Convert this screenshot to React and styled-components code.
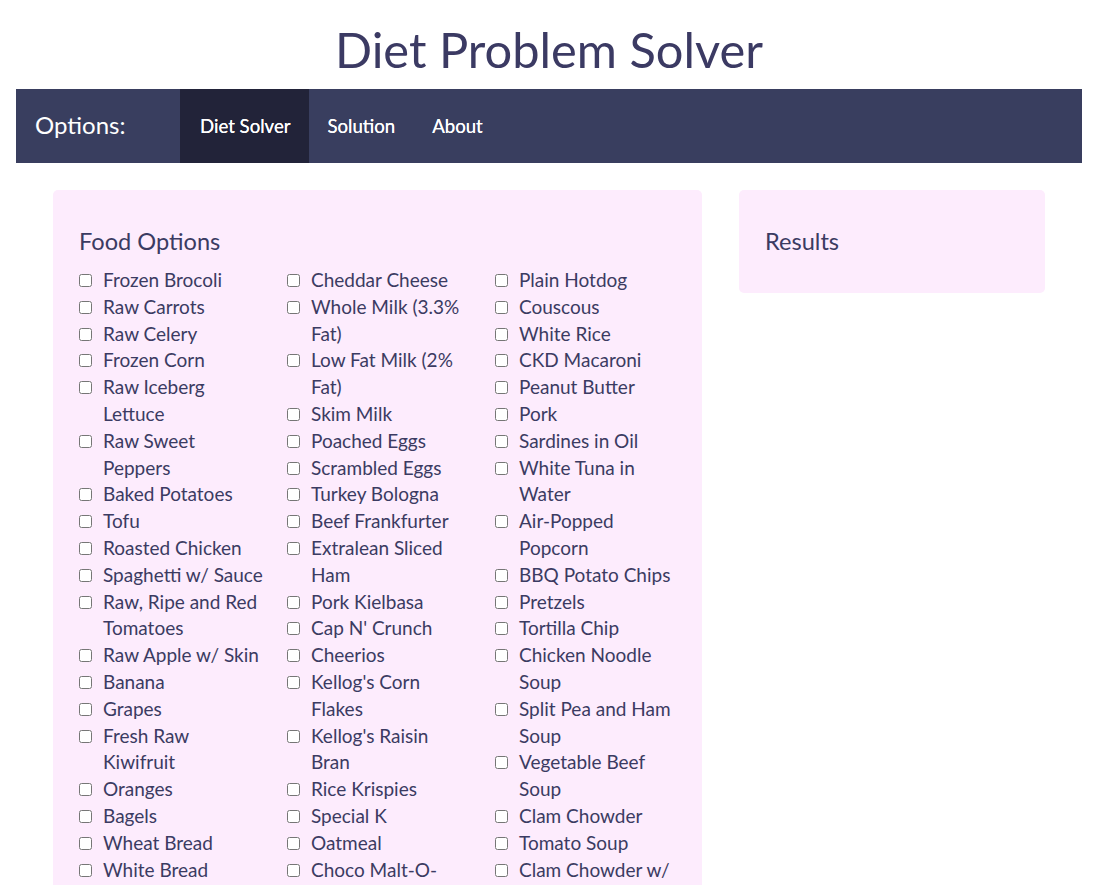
import React from "react";
import styled, { createGlobalStyle } from "styled-components";

const Global = createGlobalStyle`
  html, body { margin: 0; padding: 0; background: #fff; }
  body { font-family: Lato, "Open Sans", sans-serif; color: #3b3b62; }
`;

const Page = styled.div`
  padding: 0 19px 0 16px;
`;

const Title = styled.h1`
  margin: 20px 0 11px;
  text-align: center;
  font-size: 48.8px;
  font-weight: 400;
  line-height: 58px;
  color: #3b3a63;
`;

const Nav = styled.nav`
  display: flex;
  align-items: stretch;
  height: 74px;
  background: #393e5f;
`;

const Brand = styled.div`
  width: 145px;
  padding: 0 0 3px 19px;
  display: flex;
  align-items: center;
  font-size: 24px;
  color: #fff;
`;

const NavLink = styled.a`
  display: flex;
  align-items: center;
  padding: 0 ${(p) => (p.$active ? "19px 0 20px" : "19px 0 18px")};
  font-size: 18.6px;
  color: #fff;
  text-decoration: none;
  text-shadow: 0 0 0.4px #fff;
  background: ${(p) => (p.$active ? "#222339" : "transparent")};
`;

const Main = styled.main`
  margin: 27px 37px 0;
  display: grid;
  grid-template-columns: 649px 306px;
  column-gap: 37px;
  align-items: start;
`;

const Card = styled.section`
  background: #fdecfd;
  border-radius: 5px;
  padding: 25px 26px 26px;
`;

const Heading = styled.h2`
  margin: 12px 0 11px;
  font-size: 23.6px;
  font-weight: 400;
  line-height: 29px;
  color: #3b3b62;
`;

const Columns = styled.div`
  display: grid;
  grid-template-columns: repeat(3, 184px);
  column-gap: 24px;
`;

const Column = styled.div`
  display: flex;
  flex-direction: column;
`;

const Option = styled.label`
  display: flex;
  align-items: flex-start;
  font-size: 19px;
  line-height: 26.8px;
  color: #3b3b62;
`;

const Check = styled.input`
  flex: none;
  width: 13px;
  height: 13px;
  margin: 7px 11px 0 0;
`;

const col1 = [
  "Frozen Brocoli",
  "Raw Carrots",
  "Raw Celery",
  "Frozen Corn",
  "Raw Iceberg Lettuce",
  "Raw Sweet Peppers",
  "Baked Potatoes",
  "Tofu",
  "Roasted Chicken",
  "Spaghetti w/ Sauce",
  "Raw, Ripe and Red Tomatoes",
  "Raw Apple w/ Skin",
  "Banana",
  "Grapes",
  "Fresh Raw Kiwifruit",
  "Oranges",
  "Bagels",
  "Wheat Bread",
  "White Bread",
  "Oatmeal Cookies",
];

const col2 = [
  "Cheddar Cheese",
  "Whole Milk (3.3% Fat)",
  "Low Fat Milk (2% Fat)",
  "Skim Milk",
  "Poached Eggs",
  "Scrambled Eggs",
  "Turkey Bologna",
  "Beef Frankfurter",
  "Extralean Sliced Ham",
  "Pork Kielbasa",
  "Cap N' Crunch",
  "Cheerios",
  "Kellog's Corn Flakes",
  "Kellog's Raisin Bran",
  "Rice Krispies",
  "Special K",
  "Oatmeal",
  "Choco Malt-O-Meal",
];

const col3 = [
  "Plain Hotdog",
  "Couscous",
  "White Rice",
  "CKD Macaroni",
  "Peanut Butter",
  "Pork",
  "Sardines in Oil",
  "White Tuna in Water",
  "Air-Popped Popcorn",
  "BBQ Potato Chips",
  "Pretzels",
  "Tortilla Chip",
  "Chicken Noodle Soup",
  "Split Pea and Ham Soup",
  "Vegetable Beef Soup",
  "Clam Chowder",
  "Tomato Soup",
  "Clam Chowder w/ Milk",
];

function FoodColumn({ items }) {
  return (
    <Column>
      {items.map((name) => (
        <Option key={name}>
          <Check type="checkbox" />
          <span>{name}</span>
        </Option>
      ))}
    </Column>
  );
}

export default function App() {
  return (
    <Page>
      <Global />
      <Title>Diet Problem Solver</Title>
      <Nav>
        <Brand>Options:</Brand>
        <NavLink $active href="#">Diet Solver</NavLink>
        <NavLink href="#">Solution</NavLink>
        <NavLink href="#">About</NavLink>
      </Nav>
      <Main>
        <Card>
          <Heading>Food Options</Heading>
          <Columns>
            <FoodColumn items={col1} />
            <FoodColumn items={col2} />
            <FoodColumn items={col3} />
          </Columns>
        </Card>
        <Card>
          <Heading>Results</Heading>
        </Card>
      </Main>
    </Page>
  );
}
